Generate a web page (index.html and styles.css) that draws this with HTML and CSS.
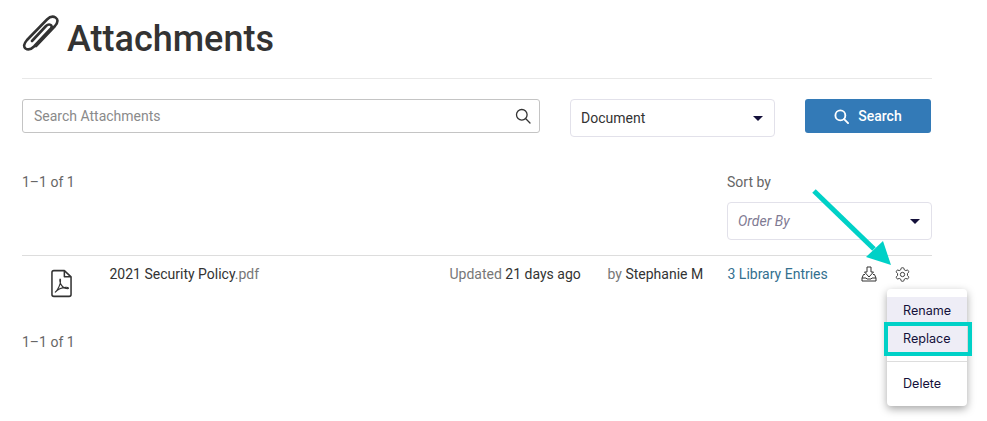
FILE: index.html
```html
<!DOCTYPE html>
<html lang="en">

<head>
    <meta charset="UTF-8">
    <meta name="viewport" content="width=device-width, initial-scale=1.0">
    <title>Attachments</title>
    <link rel="stylesheet" href="styles.css">
</head>

<body>
<div class="main">
    <div class="title">
        <svg class="clip" viewBox="0 0 38 36" width="38" height="36" fill="none" stroke="#333" stroke-width="2.600" stroke-linecap="round" stroke-linejoin="round">
            <path d="M14 31 L33 11 C36.500 7 36 4 33.500 2.500 C31 1 28 1.500 25 4.500 L5 25 C1.500 29 1.500 32 3.500 33.500 C6 35.200 9 34.500 12 31.500 L28 14.500 C30 12.500 30 10.800 28.800 10 C27.500 9.200 25.500 9.500 24 11 L10 26"/>
        </svg>
        <h1>Attachments</h1>
    </div>

    <div class="filters">
        <div class="search-box">
            <span class="placeholder">Search Attachments</span>
            <svg viewBox="0 0 16 16" width="16" height="16" fill="none" stroke="#333" stroke-width="1.300" stroke-linecap="round">
                <circle cx="6.800" cy="6.800" r="5.300"/>
                <path d="M10.800 10.800 L15 15"/>
            </svg>
        </div>
        <div class="select doc-select">
            <span>Document</span>
            <i class="caret"></i>
        </div>
        <a class="btn" href="#">
            <svg viewBox="0 0 16 16" width="15" height="15" fill="none" stroke="#fff" stroke-width="2" stroke-linecap="round">
                <circle cx="6.800" cy="6.800" r="5.300"/>
                <path d="M10.800 10.800 L15 15"/>
            </svg>
            Search
        </a>
    </div>

    <div class="toolbar">
        <div class="count">1–1 of 1</div>
        <div class="sort">
            <label>Sort by</label>
            <div class="select order-select">
                <em>Order By</em>
                <i class="caret"></i>
            </div>
        </div>
    </div>

    <div class="row">
        <div class="file-icon">
            <svg viewBox="0 0 22 30" width="21" height="29" fill="none" stroke="#333" stroke-width="1.600" stroke-linejoin="round">
                <path d="M3 1.500 H14 L21 8 V26.500 C21 27.800 20 28.500 19 28.500 H3 C2 28.500 1 27.800 1 26.500 V3.500 C1 2.300 2 1.500 3 1.500 Z"/>
                <path d="M14 1.500 V8 H21"/>
                <path stroke-width="1.200" d="M4.500 24 C7 22 10.500 15 10 11.500 C9.800 9.500 8.800 10.500 9.500 13.500 C10.200 16.500 13 20 17.500 20.500 C19 20.500 18.500 18.800 15.500 19 C12 19.200 7 21 4.500 24 Z"/>
            </svg>
        </div>
        <div class="file-name">2021 Security Policy<span class="muted">.pdf</span></div>
        <div class="updated"><span class="muted">Updated</span> 21 days ago</div>
        <div class="author"><span class="muted">by</span> Stephanie M</div>
        <a class="entries" href="#">3 Library Entries</a>
        <div class="actions">
            <svg viewBox="0 0 16 16" width="16" height="16" fill="none" stroke="#333" stroke-width="1" stroke-linejoin="round">
                <path d="M6 1 H10 V6 H12.500 L8 11 L3.500 6 H6 Z"/>
                <path d="M4 8.500 H2.500 L1 12 V15 H15 V12 L13.500 8.500 H12"/>
                <path d="M1 12 H5 L6 13 H10 L11 12 H15"/>
            </svg>
            <svg class="gear" viewBox="0 0 16 16" width="15" height="15" fill="none" stroke="#333" stroke-width="1" stroke-linejoin="round">
                <path d="M6.600 1.200 C6.800 .6 9.200 .6 9.400 1.200 L9.900 3 L11.500 3.800 L13.200 3.200 C13.800 3 15 5 14.600 5.500 L13.300 6.900 V9.100 L14.600 10.500 C15 11 13.800 13 13.200 12.800 L11.500 12.200 L9.900 13 L9.400 14.800 C9.200 15.400 6.800 15.400 6.600 14.800 L6.100 13 L4.500 12.200 L2.800 12.800 C2.200 13 1 11 1.400 10.500 L2.700 9.100 V6.900 L1.400 5.500 C1 5 2.200 3 2.800 3.200 L4.500 3.800 L6.100 3 Z"/>
                <circle cx="8" cy="8" r="2.300"/>
            </svg>
        </div>
    </div>

    <div class="count bottom-count">1–1 of 1</div>
</div>

<!-- 弹出菜单 -->
<ul class="menu">
    <li class="hover">Rename</li>
    <li class="hover">Replace</li>
    <li class="divider"></li>
    <li>Delete</li>
</ul>

<!-- annotations -->
<div class="highlight"></div>
<svg class="arrow" viewBox="0 0 100 100" width="100" height="100">
    <path d="M2 3 L62 61" stroke="#00d1c7" stroke-width="5"/>
    <path d="M54 69 L71 53 L79 77 Z" fill="#00d1c7"/>
</svg>
</body>

</html>
```
FILE: styles.css
```css
* {
    margin: 0;
    padding: 0;
    box-sizing: border-box;
}

li {
    list-style: none;
}

body {
    background: #fff;
    color: #333;
    font-family: Roboto, "Liberation Sans", sans-serif;
    font-size: 14px;
}

.main {
    width: 910px;
    margin-left: 22px;
}

.title {
    height: 79px;
    padding-top: 15px;
    display: flex;
    align-items: flex-start;
    gap: 7px;
    border-bottom: 1px solid #e8e8e8;
}

.title h1 {
    font-size: 36px;
    line-height: 48px;
    font-weight: 500;
    color: #333;
}

.filters {
    display: flex;
    align-items: flex-start;
    margin-top: 20px;
}

.search-box {
    width: 518px;
    height: 34px;
    padding: 0 8px 0 11px;
    display: flex;
    align-items: center;
    justify-content: space-between;
    border: 1px solid #c4c4c4;
    border-radius: 3px;
}

.placeholder {
    color: #8a8a8a;
}

.select {
    width: 205px;
    display: flex;
    align-items: center;
    justify-content: space-between;
    border: 1px solid #e2e1ea;
    border-radius: 4px;
    padding: 0 11px 0 10px;
}

.doc-select {
    height: 38px;
    margin-left: 30px;
    color: #333;
}

.order-select {
    height: 38px;
    margin-top: 12px;
}

.order-select em {
    color: #7f7b93;
}

.caret {
    width: 0;
    height: 0;
    border-left: 5px solid transparent;
    border-right: 5px solid transparent;
    border-top: 5px solid #14103a;
}

.btn {
    width: 126px;
    height: 34px;
    margin-left: 30px;
    display: flex;
    align-items: center;
    justify-content: center;
    gap: 9px;
    background: #337ab7;
    border-radius: 3px;
    color: #fff;
    font-weight: 500;
    text-decoration: none;
}

.toolbar {
    display: flex;
    justify-content: space-between;
    align-items: flex-start;
    height: 119px;
    padding-top: 37px;
    border-bottom: 1px solid #ddd;
}

.count {
    color: #666;
    line-height: 16px;
}

.sort {
    width: 205px;
}

.sort label {
    display: block;
    color: #666;
    line-height: 16px;
}

.row {
    display: flex;
    height: 75px;
    padding-top: 10px;
    line-height: 17px;
}

.file-icon {
    width: 87.500px;
    padding: 3px 0 0 29px;
}

.file-name {
    width: 340px;
}

.updated {
    width: 158px;
}

.author {
    width: 120px;
}

.entries {
    width: 133px;
    color: #33708f;
    text-decoration: none;
}

.actions {
    display: flex;
    gap: 18px;
}

.gear {
    margin-top: 1px;
}

.muted {
    color: #777;
}

.bottom-count {
    margin-top: 3px;
}

.menu {
    position: absolute;
    top: 289px;
    left: 887px;
    width: 80px;
    height: 117px;
    padding-top: 8px;
    background: #fff;
    border-radius: 4px;
    box-shadow: 0 3px 8px rgba(0, 0, 0, 0.35);
    color: #14103a;
    font-family: Inter, Roboto, sans-serif;
    font-size: 12.600px;
}

.menu li {
    height: 28px;
    line-height: 28px;
    padding-left: 16px;
}

.menu li.hover {
    background: #eeedf6;
}

.menu li.divider {
    height: 1px;
    margin: 8px 0;
    background: #ddd;
}

.highlight {
    position: absolute;
    top: 322px;
    left: 884px;
    width: 88px;
    height: 34px;
    border: 4px solid #00d1c7;
}

.arrow {
    position: absolute;
    top: 188px;
    left: 812px;
}
```
